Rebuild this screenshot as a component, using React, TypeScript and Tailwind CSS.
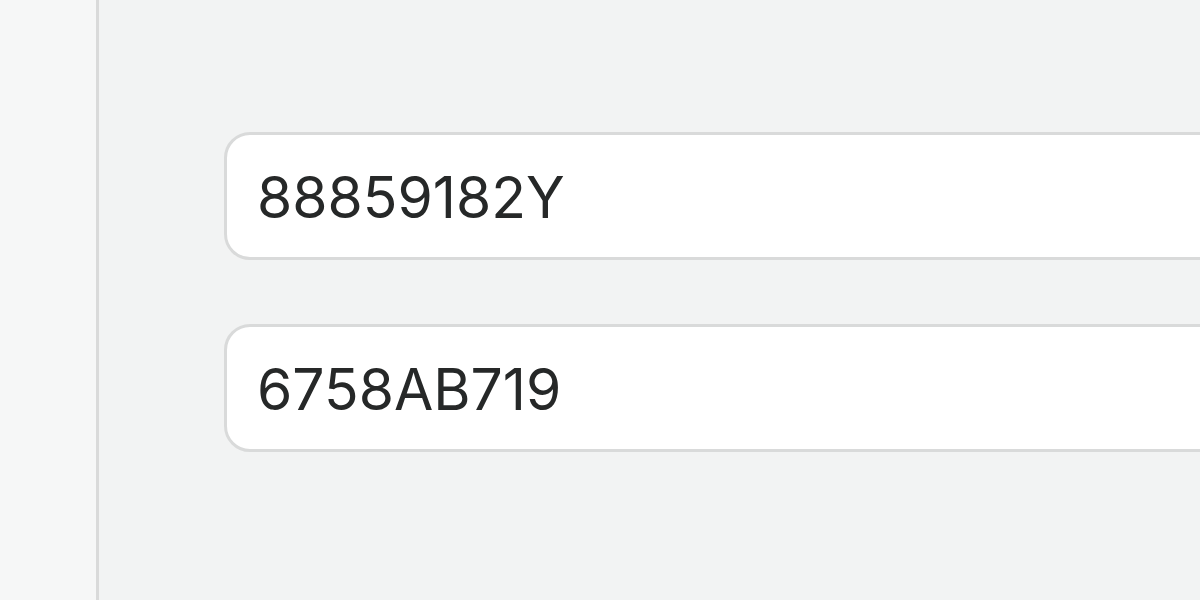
export default function App() {
  const codes = ["88859182Y", "6758AB719"];
  return (
    <div className="flex h-[600px] w-[1200px] overflow-hidden bg-[#f2f3f3] font-['Inter',sans-serif]">
      <aside className="w-[99px] shrink-0 border-r-[3px] border-[#d9dada] bg-[#f6f7f7]" />
      <main className="flex flex-1 flex-col gap-[64px] pl-[125px] pt-[132px]">
        {codes.map((c) => (
          <div
            key={c}
            className="flex h-[128px] w-[1200px] shrink-0 items-center rounded-[26px] border-[3px] border-[#d9dada] bg-white pl-[30px] pt-[3px] text-[57px] leading-none text-[#262828]"
          >
            {c}
          </div>
        ))}
      </main>
    </div>
  );
}
